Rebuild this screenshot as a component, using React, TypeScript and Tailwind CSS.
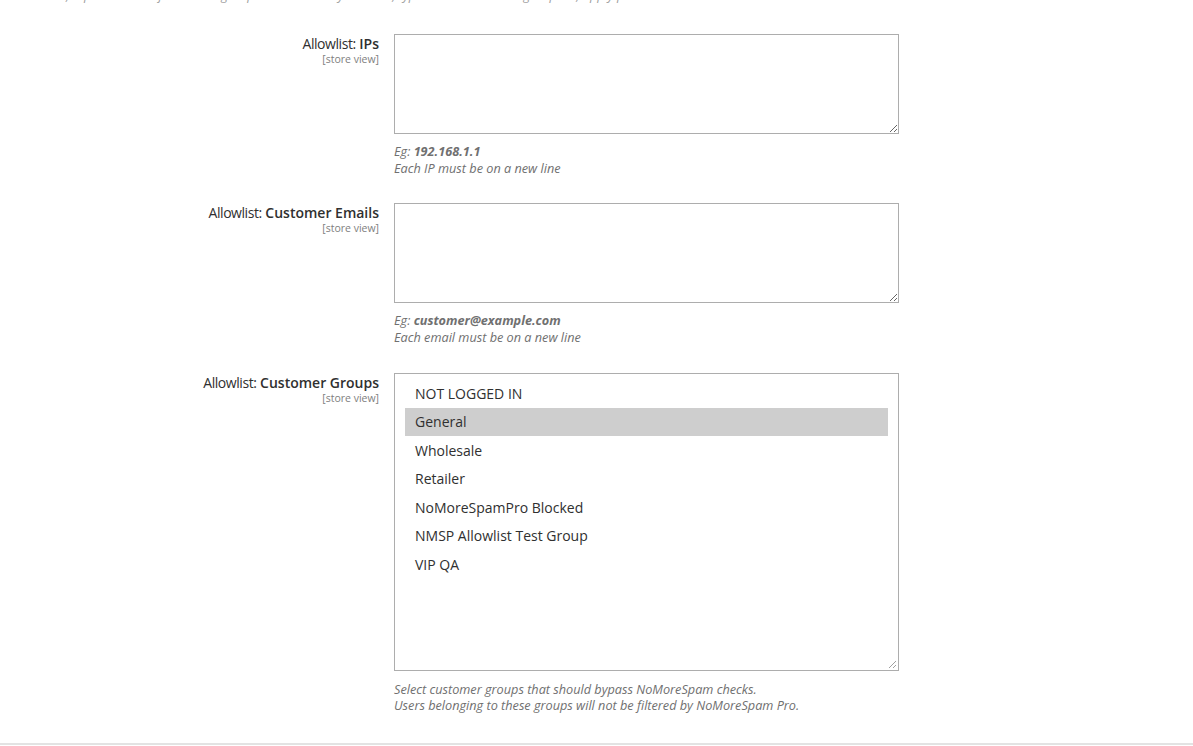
import React from 'react';

const groups = [
  'NOT LOGGED IN',
  'General',
  'Wholesale',
  'Retailer',
  'NoMoreSpamPro Blocked',
  'NMSP Allowlist Test Group',
  'VIP QA',
];

function Label({ name }: { name: string }) {
  return (
    <div className="text-right">
      <div className="text-[14px] leading-[20px] text-[#303030]">
        <span className="tracking-[-0.45px]">Allowlist:</span> <span className="font-semibold">{name}</span>
      </div>
      <div className="-mt-[1px] text-[10.5px] leading-[12px] text-[#808080]">[store view]</div>
    </div>
  );
}

function Note({ children }: { children: React.ReactNode }) {
  return <div className="text-[12.7px] italic leading-[17px] text-[#707070]">{children}</div>;
}

function ResizeHandle() {
  return (
    <svg className="absolute bottom-[1px] right-[1px]" width="9" height="9" viewBox="0 0 9 9">
      <path d="M8 1 L1 8 M8 5 L5 8" stroke="#a0a0a0" strokeWidth="1" />
    </svg>
  );
}

export default function App() {
  return (
    <div className="h-[746px] overflow-hidden bg-white" style={{ fontFamily: '"Open Sans", "Noto Sans", sans-serif' }}>
      {/* cut-off comment from the field above */}
      <div className="-mt-[13px] mb-[30px] h-[17px] pl-[22px] text-[12.7px] italic leading-[17px] text-[#a0a0a0]">
        Comma, separated list of customer groups that are always trusted, typed as shown in the group list, apply per store
      </div>

      <div className="grid grid-cols-[379px_505px] gap-x-[15px]">
        <Label name="IPs" />
        <div className="mb-[26px]">
          <textarea className="block h-[100px] w-[505px] border border-[#adadad] bg-white" />
          <div className="mt-[9px]">
            <Note>
              Eg: <span className="font-bold">192.168.1.1</span>
            </Note>
            <Note>Each IP must be on a new line</Note>
          </div>
        </div>

        <Label name="Customer Emails" />
        <div className="mb-[27px]">
          <textarea className="block h-[100px] w-[505px] border border-[#adadad] bg-white" />
          <div className="mt-[9px]">
            <Note>
              Eg: <span className="font-bold">customer@example.com</span>
            </Note>
            <Note>Each email must be on a new line</Note>
          </div>
        </div>

        <Label name="Customer Groups" />
        <div>
          <div className="relative h-[298px] w-[505px] border border-[#adadad] bg-white px-[10px] pt-[5px]">
            {groups.map((g) => (
              <div
                key={g}
                className={`flex h-[28.5px] items-center px-[10px] text-[14px] text-[#303030] ${
                  g === 'General' ? 'bg-[#cecece]' : ''
                }`}
              >
                {g}
              </div>
            ))}
            <ResizeHandle />
          </div>
          <div className="mt-[10px] text-[12.7px] italic leading-[16px] text-[#707070]">
            <div>Select customer groups that should bypass NoMoreSpam checks.</div>
            <div>Users belonging to these groups will not be filtered by NoMoreSpam Pro.</div>
          </div>
        </div>
      </div>

      <div className="mt-[30px] border-t-2 border-[#e3e3e3]" />
    </div>
  );
}
